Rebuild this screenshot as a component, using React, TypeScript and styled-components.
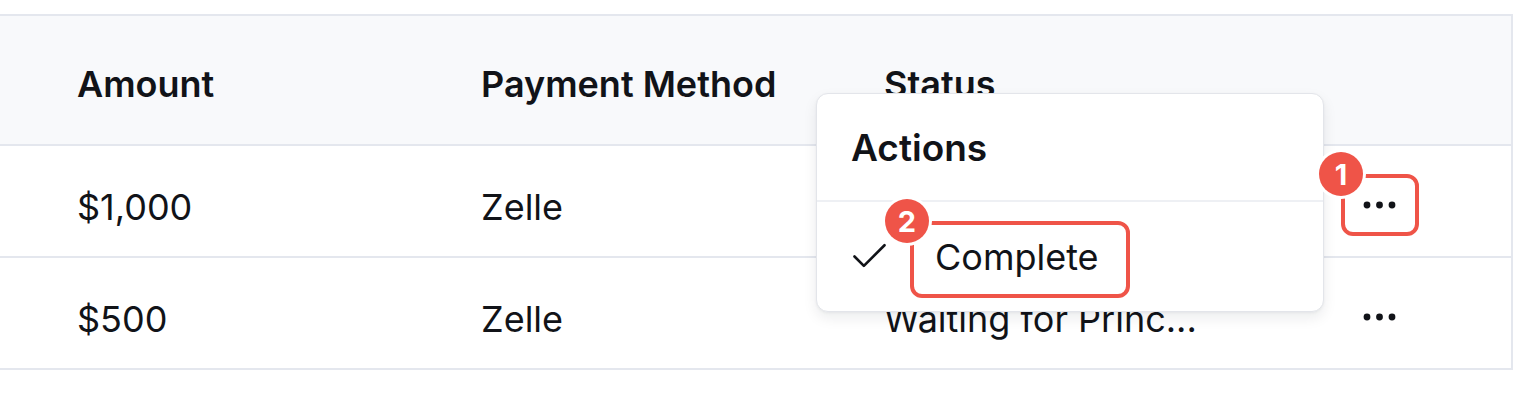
import React from "react";
import styled, { createGlobalStyle } from "styled-components";

const GlobalStyle = createGlobalStyle`
  html, body { margin: 0; padding: 0; background: #ffffff; }
  body { font-family: Inter, "Noto Sans", "Liberation Sans", sans-serif; color: #111827; }
`;

const RED = "#ef5448";
const LINE = "#e4e7ee";

const Page = styled.div`
  position: relative;
  width: 1520px;
  height: 405px;
  overflow: hidden;
  background: #fff;
  padding-top: 14px;
  box-sizing: border-box;
`;

const Table = styled.div`
  width: 1513px;
  border-top: 2px solid ${LINE};
  border-right: 2px solid ${LINE};
  box-sizing: border-box;
`;

const Row = styled.div<{ $head?: boolean }>`
  display: grid;
  grid-template-columns: 404px 403px 500px 1fr;
  height: ${(p) => (p.$head ? 128 : 110)}px;
  background: ${(p) => (p.$head ? "#f8f9fb" : "#fff")};
  border-bottom: 2px solid ${LINE};
  box-sizing: content-box;
`;

const Cell = styled.div<{ $head?: boolean }>`
  display: flex;
  align-items: center;
  padding-left: 77px;
  padding-top: ${(p) => (p.$head ? 7 : 11)}px;
  box-sizing: border-box;
  font-size: 36px;
  font-weight: ${(p) => (p.$head ? 600 : 400)};
  color: #111318;
  white-space: nowrap;
  overflow: hidden;
`;

const ActionCell = styled.div`
  display: flex;
  align-items: center;
  padding-left: 38px;
  padding-top: 8px;
  box-sizing: border-box;
`;

const DotsButton = styled.button`
  display: flex;
  align-items: center;
  justify-content: center;
  width: 70px;
  height: 56px;
  border: none;
  background: transparent;
  padding: 0;
  color: #111318;
`;

const Popup = styled.div`
  position: absolute;
  left: 816px;
  top: 93px;
  width: 508px;
  height: 219px;
  box-sizing: border-box;
  background: #fff;
  border: 1px solid #e3e5ea;
  border-radius: 12px;
  box-shadow: 0 6px 14px rgba(17, 24, 39, 0.08), 0 1px 3px rgba(17, 24, 39, 0.05);
  display: flex;
  flex-direction: column;
  z-index: 2;
`;

const MenuLabel = styled.div`
  height: 106px;
  display: flex;
  align-items: center;
  padding-left: 34px;
  font-size: 37px;
  font-weight: 600;
  color: #111318;
`;

const Separator = styled.div`
  height: 2px;
  background: #eef0f4;
`;

const MenuItem = styled.div`
  flex: 1;
  display: flex;
  align-items: center;
  padding-left: 30px;
  gap: 43px;
  font-size: 36px;
  color: #111318;
`;

const Box = styled.div`
  position: absolute;
  border: 4px solid ${RED};
  border-radius: 12px;
  box-sizing: border-box;
  z-index: 3;
`;

const Badge = styled.div`
  position: absolute;
  width: 44px;
  height: 44px;
  border-radius: 50%;
  background: ${RED};
  box-shadow: 0 0 0 3px #fff;
  color: #fff;
  font-size: 29px;
  font-weight: 700;
  display: flex;
  align-items: center;
  justify-content: center;
  z-index: 4;
`;

const Dots = () => (
  <svg width="40" height="10" viewBox="0 0 40 10">
    <circle cx="7" cy="5" r="3.4" fill="currentColor" />
    <circle cx="19.5" cy="5" r="3.4" fill="currentColor" />
    <circle cx="32" cy="5" r="3.4" fill="currentColor" />
  </svg>
);

const Check = () => (
  <svg width="45" height="45" viewBox="0 0 24 24" fill="none" stroke="#111318" strokeWidth="1.4" strokeLinecap="round" strokeLinejoin="round">
    <path d="M20 6 9 17l-5-5" />
  </svg>
);

const rows = [
  { amount: "$1,000", method: "Zelle", status: "Waiting for Princ..." },
  { amount: "$500", method: "Zelle", status: "Waiting for Princ..." },
];

export default function App() {
  return (
    <>
      <GlobalStyle />
      <Page>
        <Table>
          <Row $head>
            <Cell $head>Amount</Cell>
            <Cell $head>Payment Method</Cell>
            <Cell $head>Status</Cell>
            <ActionCell />
          </Row>
          {rows.map((r, i) => (
            <Row key={i}>
              <Cell>{r.amount}</Cell>
              <Cell>{r.method}</Cell>
              <Cell>{r.status}</Cell>
              <ActionCell>
                <DotsButton aria-label="Open menu">
                  <Dots />
                </DotsButton>
              </ActionCell>
            </Row>
          ))}
        </Table>

        <Popup>
          <MenuLabel>Actions</MenuLabel>
          <Separator />
          <MenuItem>
            <Check />
            <span>Complete</span>
          </MenuItem>
        </Popup>

        <Box style={{ left: 1341, top: 174, width: 78, height: 62 }} />
        <Badge style={{ left: 1319, top: 152 }}>1</Badge>
        <Box style={{ left: 910, top: 221, width: 220, height: 77 }} />
        <Badge style={{ left: 885, top: 199 }}>2</Badge>
      </Page>
    </>
  );
}
